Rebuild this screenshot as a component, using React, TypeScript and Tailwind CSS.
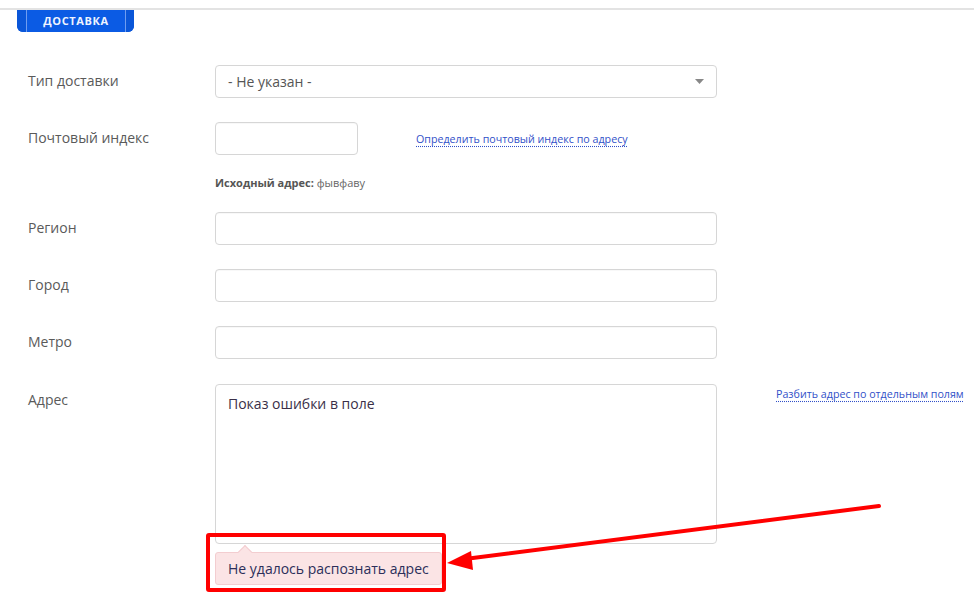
import React from "react";

const font = { fontFamily: '"Open Sans", "Noto Sans", sans-serif' };

function Label({ children, className = "" }: { children: React.ReactNode; className?: string }) {
  return <div className={`w-[187px] shrink-0 text-[14px] text-[#5a5a5a] ${className}`}>{children}</div>;
}

function Input({ className = "w-[502px]" }: { className?: string }) {
  return <div className={`h-[33px] rounded-[4px] border border-[#d6d6d6] bg-white shadow-[inset_0_1px_1px_rgba(0,0,0,0.03)] ${className}`} />;
}

export default function App() {
  return (
    <div className="relative h-[602px] w-full overflow-hidden bg-white" style={font}>
      {/* top line + tab */}
      <div className="mt-[8px] h-[2px] w-full bg-[#e3e3e3]" />
      <div className="ml-[17px] flex h-[22px] w-[117px] items-stretch overflow-hidden rounded-b-[6px] bg-[#0b5be4]">
        <div className="w-[10px] border-r border-[#6f9df0] bg-[#0a56d8]" />
        <div className="flex flex-1 items-center justify-center text-[11px] font-bold tracking-[0.6px] text-[#eef3ff]">
          ДОСТАВКА
        </div>
        <div className="w-[9px] border-l border-[#6f9df0] bg-[#0a56d8]" />
      </div>

      <div className="pl-[28px]">
        {/* Тип доставки */}
        <div className="mt-[33px] flex items-start">
          <Label className="pt-[5px]">Тип доставки</Label>
          <div className="flex h-[33px] w-[502px] items-center justify-between rounded-[4px] border border-[#d6d6d6] pl-[12px] pr-[12px] text-[14px] text-[#555]">
            <span>- Не указан -</span>
            <svg width="9" height="5" viewBox="0 0 9 5"><path d="M0 0h9L4.5 5z" fill="#888" /></svg>
          </div>
        </div>

        {/* Почтовый индекс */}
        <div className="mt-[24px] flex items-start">
          <Label className="pt-[5px]">Почтовый индекс</Label>
          <Input className="w-[143px]" />
          <a className="ml-[58px] mt-[9px] text-[10.7px] text-[#3150c8] underline decoration-dotted underline-offset-[3px]">
            Определить почтовый индекс по адресу
          </a>
        </div>
        <div className="mt-[20px] pl-[187px] text-[11px] text-[#666]">
          <span className="font-bold text-[#555]">Исходный адрес:</span> фывфаву
        </div>

        {/* Регион */}
        <div className="mt-[20px] flex items-start">
          <Label className="pt-[5px]">Регион</Label>
          <Input />
        </div>
        <div className="mt-[24px] flex items-start">
          <Label className="pt-[5px]">Город</Label>
          <Input />
        </div>
        <div className="mt-[24px] flex items-start">
          <Label className="pt-[5px]">Метро</Label>
          <Input />
        </div>

        {/* Адрес */}
        <div className="mt-[25px] flex items-start">
          <Label className="pt-[5px]">Адрес</Label>
          <div className="flex flex-col">
            <div className="h-[160px] w-[502px] rounded-[4px] border border-[#d6d6d6] px-[12px] pt-[8px] text-[14px] text-[#3a2f48]">
              Показ ошибки в поле
            </div>
            <div className="relative mt-[8px] flex h-[33px] w-fit items-center rounded-[3px] border border-[#f3cdd0] bg-[#fbe4e5] px-[12px] text-[14px] text-[#2c2f5a]">
              <span className="absolute -top-[6px] left-[24px] h-[10px] w-[10px] rotate-45 border-l border-t border-[#f3cdd0] bg-[#fbe4e5]" />
              <span className="relative">Не удалось распознать адрес</span>
            </div>
          </div>
          <a className="ml-[59px] mt-[2px] text-[10.7px] text-[#3150c8] underline decoration-dotted underline-offset-[3px]">
            Разбить адрес по отдельным полям
          </a>
        </div>
      </div>

      {/* annotation */}
      <div className="pointer-events-none absolute left-[206px] top-[533px] h-[59px] w-[240px] rounded-[3px] border-[4px] border-[#ff0000]" />
      <svg className="pointer-events-none absolute left-0 top-0" width="974" height="602">
        <line x1="879" y1="506" x2="465" y2="559" stroke="#ff0000" strokeWidth="4" strokeLinecap="round" />
        <path d="M447 563 L471 551 L473 570 Z" fill="#ff0000" />
      </svg>
    </div>
  );
}
